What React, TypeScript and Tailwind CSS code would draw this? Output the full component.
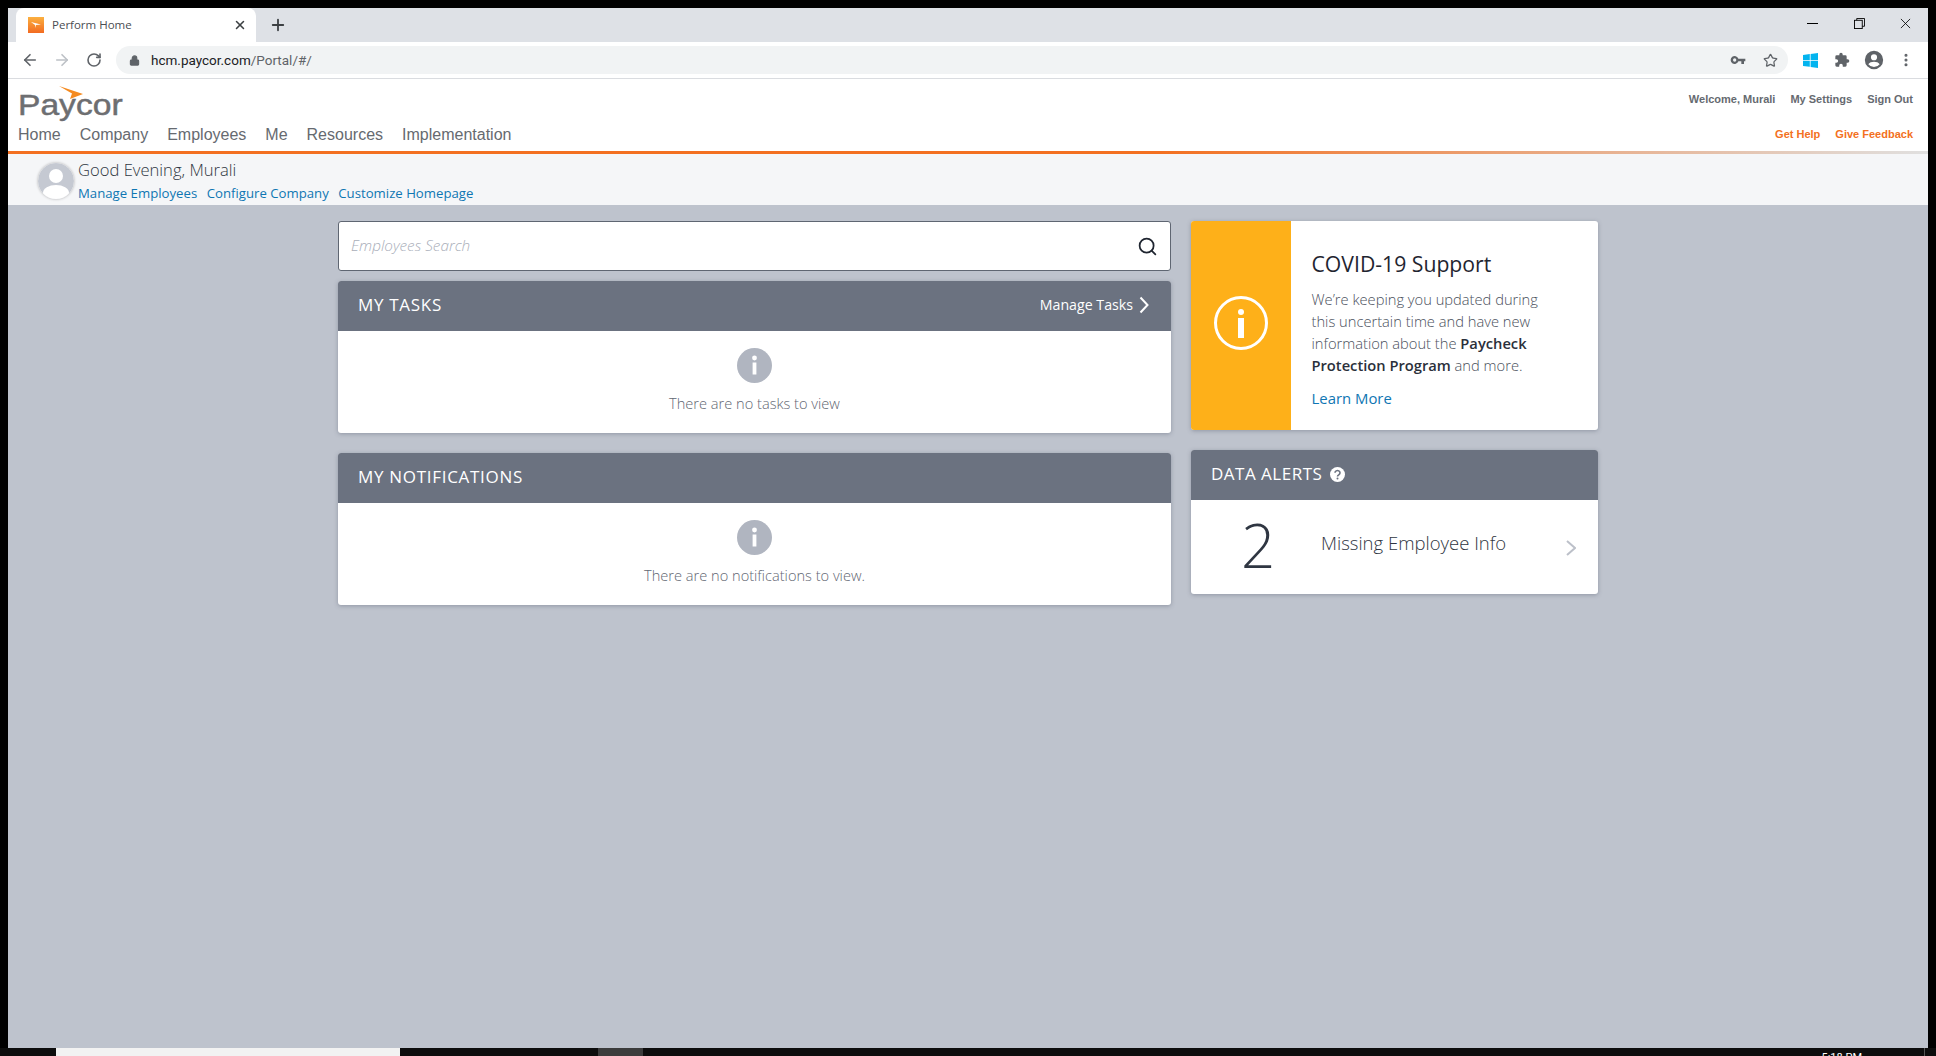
import React from "react";
import { ArrowLeft, ArrowRight, RotateCw, Lock, Star, X, Plus, Search, MoreVertical } from "lucide-react";

const ui = "font-['Open_Sans','Noto_Sans',sans-serif]";

function InfoDot() {
  return (
    <svg width="35" height="35" viewBox="0 0 35 35" className="block">
      <circle cx="17.5" cy="17.5" r="17.5" fill="#b0b5c0" />
      <circle cx="17.5" cy="10" r="2.4" fill="#fff" />
      <rect x="15.6" y="14.5" width="3.8" height="12" fill="#fff" />
    </svg>
  );
}

function EmptyPanel({ title, text, right }: { title: string; text: string; right?: React.ReactNode }) {
  return (
    <div className="h-[152px] bg-white rounded-[3px] shadow-[0_1px_4px_rgba(60,70,90,0.35)] flex flex-col">
      <div className="h-[50px] shrink-0 bg-[#6b7280] rounded-t-[3px] flex items-center justify-between pl-5 pr-[22px] pb-[2px] text-white">
        <div className="text-[17px] tracking-[0.7px]">{title}</div>
        {right}
      </div>
      <div className="flex-1 flex flex-col items-center pt-[17px]">
        <InfoDot />
        <div className="mt-[10px] text-[14.6px] font-light text-[#5f6672]">{text}</div>
      </div>
    </div>
  );
}

export default function App() {
  return (
    <div className={`w-[1936px] h-[1056px] bg-black overflow-hidden flex flex-col pt-2 ${ui}`}>
      <div className="flex-1 min-h-0 mx-2 flex flex-col bg-[#bec3cd]">
        {/* Tab strip */}
        <div className="h-[34px] shrink-0 bg-[#dee1e6] flex items-stretch pl-[8px]">
          <div className="w-[240px] bg-white rounded-t-[8px] flex items-center pl-[12px] pr-[9px]">
            <svg width="16" height="16" viewBox="0 0 16 16" className="shrink-0">
              <defs>
                <linearGradient id="fav" x1="0" y1="0" x2="0" y2="1">
                  <stop offset="0" stopColor="#fbb040" />
                  <stop offset="1" stopColor="#f26b21" />
                </linearGradient>
              </defs>
              <rect width="16" height="16" fill="url(#fav)" />
              <path d="M3 5 L13 7.5 L8 8 L7 11 L7 8 Z" fill="#fff" />
            </svg>
            <span className="ml-2 text-[11.5px] text-[#4a4d52] flex-1">Perform Home</span>
            <X size={14} strokeWidth={2.6} className="text-[#3c4043]" />
          </div>
          <div className="ml-[13px] flex items-center">
            <Plus size={18} strokeWidth={2.4} className="text-[#3c4043]" />
          </div>
          <div className="ml-auto flex items-center pr-[17px] pb-[4px] gap-[35.5px] text-black">
            <div className="w-[11px] h-px bg-black" />
            <svg width="11" height="11" viewBox="0 0 12 12" fill="none" stroke="#000" strokeWidth="1">
              <rect x="0.5" y="2.5" width="8.5" height="9" />
              <path d="M3 2.5 V0.5 H11.5 V9 H9" />
            </svg>
            <svg width="11" height="11" viewBox="0 0 12 12" stroke="#000" strokeWidth="0.9">
              <path d="M1 1 L11 11 M11 1 L1 11" />
            </svg>
          </div>
        </div>

        {/* Toolbar */}
        <div className="h-[37px] shrink-0 bg-white border-b border-[#dadce0] flex items-center pl-[13px] pr-[14px] font-['Roboto',sans-serif]">
          <ArrowLeft size={18} strokeWidth={2.2} className="text-[#5f6368]" />
          <ArrowRight size={18} strokeWidth={2.2} className="ml-[14px] text-[#bdc1c6]" />
          <RotateCw size={16} strokeWidth={2.4} className="ml-[15px] text-[#5f6368]" />
          <div className="ml-[14px] w-[1672px] h-[28px] rounded-full bg-[#f1f3f4] flex items-center pl-[13px] pr-[10px]">
            <Lock size={11} fill="#5f6368" strokeWidth={2.4} className="text-[#5f6368]" />
            <span className="ml-[11px] text-[13.5px] text-[#202124]">
              hcm.paycor.com<span className="text-[#5f6368]">/Portal/#/</span>
            </span>
            <svg width="16" height="16" viewBox="0 0 24 24" className="ml-auto" fill="#5f6368">
              <path d="M12.6 10A6 6 0 1 0 12.6 14H17v4h4v-4h2v-4H12.6ZM7 14.5a2.5 2.5 0 1 1 0-5 2.5 2.5 0 0 1 0 5Z" />
            </svg>
            <Star size={15} strokeWidth={2} className="ml-[17px] text-[#5f6368]" />
          </div>
          <svg width="15" height="15" viewBox="0 0 15 15" className="ml-[15px]" fill="#03b4ef">
            <path d="M0 2 L6.8 1 V7 H0 Z M7.6 0.9 L15 0 V7 H7.6 Z M0 7.8 H6.8 V13.8 L0 13 Z M7.6 7.8 H15 V15 L7.6 14 Z" />
          </svg>
          <svg width="16" height="16" viewBox="0 0 24 24" className="ml-[16px]" fill="#5f6368">
            <path d="M20.5 11H19V7a2 2 0 0 0-2-2h-4V3.5a2.5 2.5 0 0 0-5 0V5H4a2 2 0 0 0-2 2v3.8h1.5a2.7 2.7 0 0 1 0 5.4H2V20a2 2 0 0 0 2 2h3.8v-1.5a2.7 2.7 0 0 1 5.4 0V22H17a2 2 0 0 0 2-2v-4h1.5a2.5 2.5 0 0 0 0-5Z" />
          </svg>
          <svg width="20" height="20" viewBox="0 0 24 24" className="ml-[14px]" fill="#5f6368">
            <path d="M12 1a11 11 0 1 0 0 22 11 11 0 0 0 0-22Zm0 4a3.7 3.7 0 1 1 0 7.4A3.7 3.7 0 0 1 12 5Zm0 15.5a8.6 8.6 0 0 1-6.8-3.4c.9-2 4.3-3 6.8-3s5.900 1 6.800 3a8.600 8.600 0 0 1-6.800 3.400Z" />
          </svg>
          <MoreVertical size={16} strokeWidth={2.6} className="ml-[14px] text-[#5f6368]" />
        </div>

        {/* App header */}
        <div className="h-[72px] shrink-0 bg-white flex justify-between font-['Liberation_Sans',Arial,sans-serif]">
          <div className="pl-[10px] flex flex-col">
            <div className="relative h-[40px] pt-[11px]">
              <div className="text-[30px] leading-[30px] text-[#6d6e71] origin-left [transform:scaleX(1.12)] [-webkit-text-stroke:0.5px_#6d6e71]">
                Paycor
              </div>
              <svg width="24" height="13" viewBox="0 0 24 13" className="absolute left-[41px] top-[7px]">
                <path d="M0 0 L24 8 L11 13 L13 7.500 Z" fill="#f58a1f" />
              </svg>
            </div>
            <nav className="mt-[7px] flex gap-[19px] text-[16px] leading-[18px] text-[#666a70]">
              <span>Home</span>
              <span>Company</span>
              <span>Employees</span>
              <span>Me</span>
              <span>Resources</span>
              <span>Implementation</span>
            </nav>
          </div>
          <div className="pr-[15px] flex flex-col items-end text-[11px] font-bold leading-[13px]">
            <div className="mt-[14px] flex gap-[15px] text-[#666a70]">
              <span>Welcome, Murali</span>
              <span>My Settings</span>
              <span>Sign Out</span>
            </div>
            <div className="mt-[22px] flex gap-[15px] text-[#f37021]">
              <span>Get Help</span>
              <span>Give Feedback</span>
            </div>
          </div>
        </div>
        <div className="h-[3px] shrink-0 bg-[linear-gradient(to_right,#f37021_0%,#f37021_60%,#e0e0e0_100%)]" />

        {/* Greeting */}
        <div className="h-[51px] shrink-0 bg-[#f5f6f8] flex pl-[30px] pt-[5px]">
          <svg width="36" height="36" viewBox="0 0 36 36" className="mt-[4px] rounded-full shadow-[0_0_3px_rgba(0,0,0,0.3)]">
            <circle cx="18" cy="18" r="18" fill="#c5c9d2" />
            <circle cx="18" cy="13" r="7" fill="#fff" />
            <ellipse cx="18" cy="30" rx="13" ry="8" fill="#fff" />
          </svg>
          <div className="ml-[4px] flex flex-col">
            <div className="text-[16.6px] leading-[22px] text-[#2f3642] font-light">Good Evening, Murali</div>
            <div className="mt-[3px] flex gap-[9.5px] text-[13.2px] leading-[18px] text-[#0f76b3]">
              <span>Manage Employees</span>
              <span>Configure Company</span>
              <span>Customize Homepage</span>
            </div>
          </div>
        </div>

        {/* Main */}
        <div className="flex-1 min-h-0 flex justify-center items-start pt-4 gap-5">
          <div className="w-[833px] flex flex-col">
            <div className="h-[50px] bg-white border border-[#5f6672] rounded-[3px] flex items-center justify-between pl-3 pr-[12px]">
              <span className="text-[15.3px] italic font-light text-[#a9aeb9] pb-[2px]">Employees Search</span>
              <Search size={21} strokeWidth={2} className="text-[#1f2530]" />
            </div>
            <div className="mt-[10px]">
              <EmptyPanel
                title="MY TASKS"
                text="There are no tasks to view"
                right={
                  <div className="flex items-center text-[14.2px]">
                    Manage Tasks
                    <svg width="10" height="18" viewBox="0 0 10 18" className="ml-[6px]" fill="none" stroke="#fff" strokeWidth="2">
                      <path d="M1.500 1.500 L8.500 9 L1.500 16.500" />
                    </svg>
                  </div>
                }
              />
            </div>
            <div className="mt-5">
              <EmptyPanel title="MY NOTIFICATIONS" text="There are no notifications to view." />
            </div>
          </div>

          <div className="w-[407px] flex flex-col gap-5">
            <div className="h-[209px] bg-white rounded-[3px] overflow-hidden shadow-[0_1px_4px_rgba(60,70,90,0.35)] flex">
              <div className="w-[100px] bg-[#feb019] flex items-center justify-center pb-[5px]">
                <svg width="56" height="56" viewBox="0 0 56 56">
                  <circle cx="28" cy="28" r="25.500" fill="none" stroke="#fff" strokeWidth="3" />
                  <circle cx="28" cy="17" r="3" fill="#fff" />
                  <rect x="25" y="23" width="6" height="20" fill="#fff" />
                </svg>
              </div>
              <div className="flex-1 pl-[20.5px] pt-[28px]">
                <div className="text-[21.2px] leading-[30px] text-[#1f2530]">COVID-19 Support</div>
                <div className="mt-[9px] text-[14.7px] leading-[22px] font-light text-[#4a505c] w-[250px]">
                  We’re keeping you updated during this uncertain time and have new information about the{" "}
                  <b className="font-semibold text-[#2b303b]">Paycheck Protection Program</b> and more.
                </div>
                <div className="mt-[11px] text-[14.9px] leading-[22px] text-[#0f76b3]">Learn More</div>
              </div>
            </div>

            <div className="h-[144px] bg-white rounded-[3px] shadow-[0_1px_4px_rgba(60,70,90,0.35)] flex flex-col">
              <div className="h-[50px] shrink-0 bg-[#6b7280] rounded-t-[3px] flex items-center pl-5 pb-[2px] text-white">
                <span className="text-[17px] tracking-[0.5px]">DATA ALERTS</span>
                <svg width="15" height="15" viewBox="0 0 15 15" className="ml-[8px]">
                  <circle cx="7.500" cy="7.500" r="7.500" fill="#fff" />
                  <path d="M5 5.800 a2.500 2.300 0 1 1 3.800 2 c-.8.5-1.300.8-1.300 1.600" fill="none" stroke="#6b7280" strokeWidth="1.600" />
                  <circle cx="7.500" cy="11.500" r="1" fill="#6b7280" />
                </svg>
              </div>
              <div className="flex-1 flex items-center">
                <div className="w-[130px] text-center text-[60px] leading-[60px] font-light text-[#2f3642] pl-[4px] pb-[4px]">2</div>
                <div className="text-[18.5px] font-light text-[#2f3642] pb-[8px]">Missing Employee Info</div>
                <svg width="10" height="16" viewBox="0 0 10 16" className="ml-auto mr-[22px] mt-[2px]" fill="none" stroke="#bcc0c9" strokeWidth="2">
                  <path d="M1 1 L9 8 L1 15" />
                </svg>
              </div>
            </div>
          </div>
        </div>
      </div>

      {/* Taskbar sliver */}
      <div className="h-[8px] shrink-0 bg-[#0d0d0d] flex overflow-hidden font-['Roboto',sans-serif]">
        <div className="ml-[56px] w-[344px] bg-[#f2f2f2]" />
        <div className="ml-[198px] w-[45px] bg-[#3c3c3c]" />
        <div className="ml-auto mr-[62px] text-[11px] leading-[13px] text-white pt-[3px]">5:18 PM</div>
        <div className="w-px bg-[#555] mr-[11px]" />
      </div>
    </div>
  );
}
